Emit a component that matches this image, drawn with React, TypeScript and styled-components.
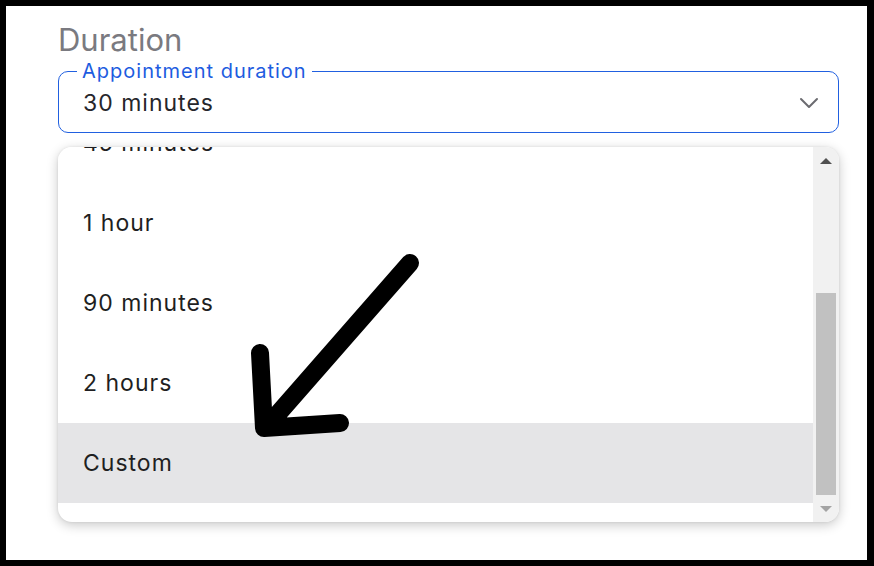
import styled, { createGlobalStyle } from 'styled-components';

const Global = createGlobalStyle`
  html, body { margin: 0; padding: 0; }
  body { font-family: Inter, "Liberation Sans", sans-serif; }
`;

const Frame = styled.div`
  position: relative;
  width: 874px;
  height: 566px;
  box-sizing: border-box;
  background: #000;
  padding: 6px 7px 6px 6px;
`;

const Page = styled.div`
  height: 100%;
  background: #fff;
  padding: 17px 28px 0 52px;
  box-sizing: border-box;
`;

const Heading = styled.h2`
  margin: 0 0 4px;
  font-size: 31px;
  line-height: 34px;
  font-weight: 400;
  color: #7a7a80;
`;

const Field = styled.fieldset`
  margin: 0;
  padding: 0 19px 0 24px;
  height: 72px;
  box-sizing: border-box;
  border: 1.5px solid #2160e0;
  border-radius: 10px;
  display: flex;
  align-items: center;
  justify-content: space-between;
`;

const Legend = styled.legend`
  padding: 0 5px;
  margin-left: -6px;
  font-size: 20px;
  letter-spacing: 1px;
  color: #1d5ce0;
  line-height: 20px;
`;

const Value = styled.span`
  font-size: 23px;
  letter-spacing: 1px;
  color: #26262b;
  margin-top: -8px;
`;

const Chevron = styled.svg`
  width: 20px;
  height: 12px;
  margin-top: -8px;
`;

const Menu = styled.div`
  margin-top: 14px;
  height: 375px;
  display: flex;
  border-radius: 14px;
  overflow: hidden;
  background: #fff;
  box-shadow: 0 3px 12px rgba(0, 0, 0, 0.22), 0 0 3px rgba(0, 0, 0, 0.08);
`;

const List = styled.ul`
  flex: 1;
  margin: 0;
  padding: 0;
  list-style: none;
  overflow: hidden;
`;

const Scrolled = styled.div`
  margin-top: -44px;
`;

const Item = styled.li<{ $active?: boolean }>`
  height: 80px;
  display: flex;
  align-items: center;
  padding-left: 25px;
  font-size: 23px;
  letter-spacing: 1px;
  color: #1f1f22;
  background: ${(p) => (p.$active ? '#e5e5e7' : '#fff')};
`;

const Scrollbar = styled.div`
  width: 26px;
  background: #f1f1f1;
  display: flex;
  flex-direction: column;
  align-items: center;
`;

const ArrowBtn = styled.div<{ $down?: boolean; $dim?: boolean }>`
  height: 27px;
  width: 100%;
  display: flex;
  align-items: center;
  justify-content: center;
  &::before {
    content: '';
    width: 0;
    height: 0;
    border-left: 6px solid transparent;
    border-right: 6px solid transparent;
    ${(p) =>
      p.$down
        ? `border-top: 6px solid ${p.$dim ? '#a3a3a3' : '#505050'};`
        : `border-bottom: 6px solid ${p.$dim ? '#a3a3a3' : '#505050'};`}
  }
`;

const Track = styled.div`
  flex: 1;
  width: 100%;
  display: flex;
  flex-direction: column;
  justify-content: flex-end;
  align-items: center;
`;

const Thumb = styled.div`
  width: 20px;
  background: #c1c1c1;
`;

const Pointer = styled.svg`
  position: absolute;
  left: 0;
  top: 0;
  width: 874px;
  height: 566px;
  pointer-events: none;
`;

const options = ['45 minutes', '1 hour', '90 minutes', '2 hours', 'Custom'];

export default function App() {
  return (
    <>
      <Global />
      <Frame>
        <Page>
          <Heading>Duration</Heading>
          <Field>
            <Legend>Appointment duration</Legend>
            <Value>30 minutes</Value>
            <Chevron viewBox="0 0 20 12">
              <path d="M2 2 L10 10 L18 2" fill="none" stroke="#6b6b70" strokeWidth="2" strokeLinecap="round" strokeLinejoin="round" />
            </Chevron>
          </Field>
          <Menu>
            <List>
              <Scrolled>
                {options.map((o) => (
                  <Item key={o} $active={o === 'Custom'}>{o}</Item>
                ))}
              </Scrolled>
            </List>
            <Scrollbar>
              <ArrowBtn />
              <Track>
                <Thumb style={{ height: 202 }} />
              </Track>
              <ArrowBtn $down $dim />
            </Scrollbar>
          </Menu>
        </Page>
        <Pointer viewBox="0 0 874 566">
          <path
            d="M410 263 L269 424 M260 353 L264 428 L340 423"
            fill="none"
            stroke="#000"
            strokeWidth="18"
            strokeLinecap="round"
            strokeLinejoin="round"
          />
        </Pointer>
      </Frame>
    </>
  );
}
